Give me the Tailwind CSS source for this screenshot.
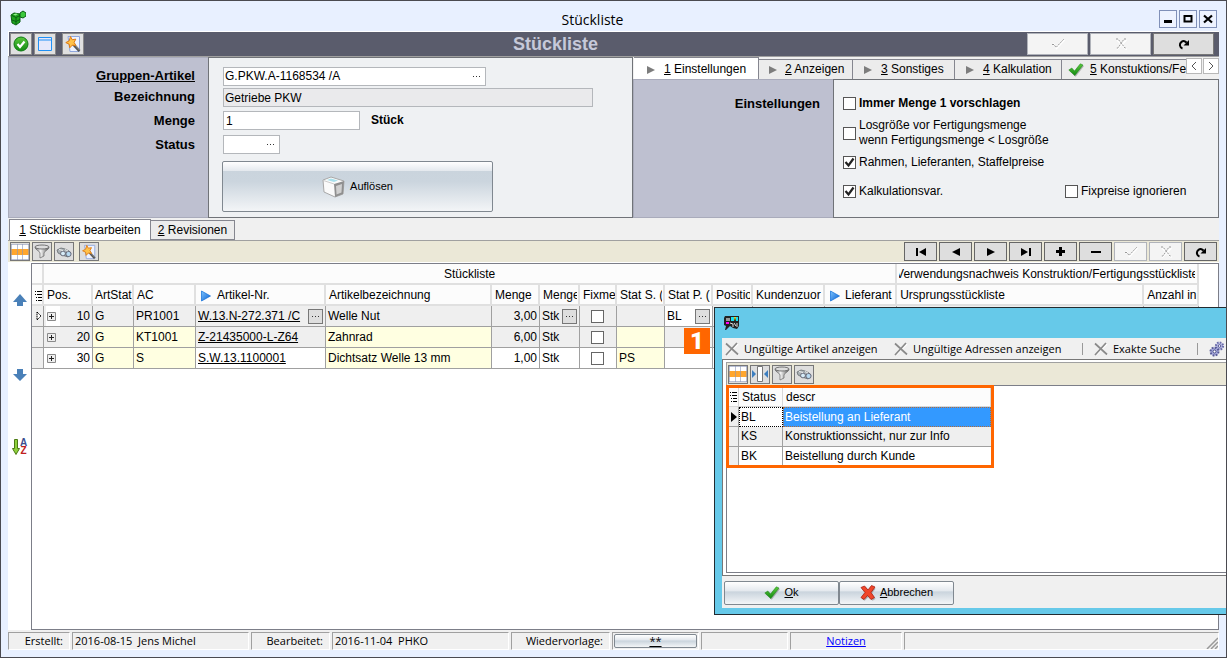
<!DOCTYPE html>
<html lang="de">
<head>
<meta charset="utf-8">
<title>Stückliste</title>
<script src="https://cdn.jsdelivr.net/npm/@tailwindcss/browser@4"></script>
</head>
<body class="bg-white">
<svg class="absolute size-0" aria-hidden="true">
  <defs>
    <linearGradient id="gr" x1="0" y1="0" x2="0" y2="1"><stop offset="0" stop-color="#5cc83c"/><stop offset="1" stop-color="#128a12"/></linearGradient>
    <linearGradient id="bl" x1="0" y1="0" x2="1" y2="1"><stop offset="0" stop-color="#7cc4ff"/><stop offset="1" stop-color="#0a5fd0"/></linearGradient>
    <linearGradient id="fu" x1="0" y1="0" x2="1" y2="0"><stop offset="0" stop-color="#777"/><stop offset=".4" stop-color="#f4f4f4"/><stop offset="1" stop-color="#555"/></linearGradient>
  </defs>
  <symbol id="wand" viewBox="0 0 18 18"><path d="M4 1.500h11.500v15H6z" fill="#eef3ff" stroke="#8fa6dc"/><path d="M9 9l6.500 7" stroke="#555" stroke-width="2.600"/><path d="M9.500 8.500l6 6.500" stroke="#aaa" stroke-width=".8"/><path d="M6.500 1.500l1.700 3.200 3.600-.6-1.700 3.300 1.800 3.200-3.600-.5-2.500 2.700-.6-3.600L1.800 7.600l3.400-1.700z" fill="#ffc24a" stroke="#e07a10"/></symbol>
  <symbol id="rows" viewBox="0 0 18 16"><path d="M0 0h18v16H0z" fill="#fff"/><path d="M0 5h18v6H0z" fill="#ffa62e"/><path d="M0 .5h18M0 15.500h18M.5 0v16M6.500 0v16M11.500 0v16M17.500 0v16" stroke="#8b96b8" stroke-opacity=".6" fill="none"/></symbol>
  <symbol id="funnel" viewBox="0 0 16 16"><path d="M1 3c0 3 5 4 5 6v5l4-2V9c0-2 5-3 5-6z" fill="url(#fu)" stroke="#666" stroke-width=".7"/><ellipse cx="8" cy="3" rx="7" ry="2" fill="#ddd" stroke="#666" stroke-width=".9"/></symbol>
  <symbol id="bino" viewBox="0 0 16 16"><path d="M1 6l4-2 4 1 4 2 2 3-3 3-6-2-4-2z" fill="#a9b0b4" stroke="#666c70" stroke-width=".8"/><circle cx="7" cy="9.500" r="2.400" fill="#d7ecf8" stroke="#556" stroke-width=".8"/><circle cx="12.500" cy="10" r="2.600" fill="#b7daf2" stroke="#556" stroke-width=".8"/><path d="M3 5.500l4 1M9 5.500l3 1.500" stroke="#eee"/></symbol>
  <symbol id="check" viewBox="0 0 16 14"><path d="M1 7.500l3-2 2.500 3L12.500 1l2.800 1.300L7 13z" fill="#777" opacity=".5" transform="translate(.7 .8)"/><path d="M.8 7l3-2 2.700 3L12.300.8 15 2 6.800 12.600z" fill="url(#gr)" stroke="#158015" stroke-width=".5"/></symbol>
  <symbol id="okdim" viewBox="0 0 14 12"><path d="M1 7l1.500-1L5.500 10.500 13.500 2" stroke="#fff" stroke-width="1.500" fill="none"/><path d="M1 6.500h2l2 3 7.500-8h1" stroke="#999" stroke-dasharray="2 1" fill="none"/></symbol>
  <symbol id="xdim" viewBox="0 0 12 12"><path d="M2 2l9.500 9.500M11.500 2L2 11.500" stroke="#fff" stroke-width="1.500"/><path d="M1 1h2l7 9h1M11 1H9L3 10H1" stroke="#999" stroke-dasharray="2 1" fill="none"/></symbol>
  <symbol id="redo" viewBox="0 0 12 12"><path d="M4.500 10.500C1.500 9.500 1 5.500 3.500 3.800c2-1.400 4.200-.6 5 1" fill="none" stroke="#000" stroke-width="2"/><path d="M11 2v5.500H5.500z" fill="#000"/></symbol>
  <symbol id="grayx" viewBox="0 0 14 14"><path d="M2 2l11 11M13 2L2 13" stroke="#fff" stroke-width="1.500"/><path d="M1 1.500l12 11M12 1L1 13" stroke="#8a8a8a" stroke-width="1.700"/></symbol>
  <symbol id="play" viewBox="0 0 10 12"><path d="M.5 1l9 5-9 5z" fill="url(#bl)" stroke="#0a6cd8" stroke-width=".7"/></symbol>
  <symbol id="lines" viewBox="0 0 7 10"><path d="M0 .5h1M2 .5h5M0 3.500h1M2 3.500h5M1 6.500h1M3 6.500h4M1 9.500h1M3 9.500h4" stroke="#000"/></symbol>
  <symbol id="plus" viewBox="0 0 9 9"><path d="M.5.5h8v8h-8z" fill="#eee" stroke="#8a8a8a"/><path d="M2 4.500h5M4.500 2v5" stroke="#222"/></symbol>
  <symbol id="tab" viewBox="0 0 8 8"><path d="M0 0l8 4-8 4z" fill="#7d7d7d"/></symbol>
  <symbol id="tick" viewBox="0 0 11 11"><path d="M1.500 5l3 3.500L9.500 1.500" fill="none" stroke="#222" stroke-width="2.200"/></symbol>
  <symbol id="dots" viewBox="0 0 9 3"><path d="M1 1h1v1H1zM4 1h1v1H4zM7 1h1v1H7z" fill="#333"/></symbol>
</svg>

<div class="relative flex h-screen min-h-[640px] flex-col overflow-hidden border border-[#4a4a50] bg-[#e8f0ff] px-[7px] pb-[7px] text-[12px] leading-[15px] text-black font-['Liberation_Sans',sans-serif]">

  <header class="flex h-[30px] shrink-0 items-center pl-0.5 pr-0.5">
    <svg class="mt-1 size-4" viewBox="0 0 16 16"><path d="M1 5l3-2 6 1v8l-4 3-4-2z" fill="#1fa51f" stroke="#0a5f12"/><path d="M10 3l3-2 3 2v3l-3 2-3-1z" fill="#3cc83c" stroke="#0a5f12"/><path d="M2 5.500l4 2 4-2M6 7.500V14M2 10l4 1.500 4-2" stroke="#0a5f12" fill="none"/><path d="M3 4.500l3-1 2 .5-2.500 1.500z" fill="#8ff08a"/></svg>
    <h1 class="flex-1 pt-2 text-center text-[14px] leading-5 font-['Open_Sans',sans-serif]">Stückliste</h1>
    <div class="flex gap-0.5 pt-1.5">
      <button aria-label="Minimieren" class="grid size-[18px] place-items-center border border-[#8090b8] bg-[#eef3ff]"><svg class="size-3" viewBox="0 0 12 12"><path d="M2 7h8v3H2z"/></svg></button>
      <button aria-label="Maximieren" class="grid size-[18px] place-items-center border border-[#8090b8] bg-[#eef3ff]"><svg class="size-3" viewBox="0 0 12 12"><path d="M2.500 3h7v5.500h-7z" fill="none" stroke="#000" stroke-width="2"/></svg></button>
      <button aria-label="Schließen" class="grid size-[18px] place-items-center border border-[#8090b8] bg-[#eef3ff]"><svg class="size-3" viewBox="0 0 12 12"><path d="M2 2.500l8 7M10 2.500l-8 7" stroke="#000" stroke-width="2.200"/></svg></button>
    </div>
  </header>

  <div class="flex h-[25px] shrink-0 items-center border-t border-l border-white bg-[#5a5c6c] pl-px pr-[5px]">
    <button aria-label="Speichern" class="grid size-[22px] place-items-center border border-[#8a8a8a] bg-[#e0e0e0]"><svg class="size-4" viewBox="0 0 16 16"><circle cx="8" cy="8" r="7" fill="url(#gr)" stroke="#0d7a12"/><path d="M4.500 8l2.500 3 4.500-5.500" stroke="#fff" stroke-width="2.200" fill="none"/></svg></button>
    <button aria-label="Fenster" class="ml-0.5 grid size-[22px] place-items-center border border-[#8a8a8a] bg-[#e0e0e0]"><svg class="size-4" viewBox="0 0 16 16"><path d="M1.500 1.500h13v13h-13z" fill="#e6e8fb" stroke="#1e90f5"/><path d="M1.500 4h13" stroke="#1e90f5"/></svg></button>
    <button aria-label="Assistent" class="ml-1.5 grid size-[22px] place-items-center border border-[#8a8a8a] bg-[#e0e0e0]"><svg class="size-[18px]"><use href="#wand"/></svg></button>
    <h2 class="flex-1 text-center text-[18px] leading-6 font-bold text-[#c6c9d9]">Stückliste</h2>
    <div class="flex gap-0.5">
      <button aria-label="Bestätigen" disabled class="grid h-[22px] w-[61px] place-items-center border border-[#b0b3ba] bg-[#f4f4f4]"><svg class="h-3 w-3.5"><use href="#okdim"/></svg></button>
      <button aria-label="Verwerfen" disabled class="grid h-[22px] w-[61px] place-items-center border border-[#b0b3ba] bg-[#f4f4f4]"><svg class="size-3"><use href="#xdim"/></svg></button>
      <button aria-label="Aktualisieren" class="grid h-[22px] w-[61px] place-items-center border border-[#777] bg-[#dedede]"><svg class="size-3"><use href="#redo"/></svg></button>
    </div>
  </div>

  <section class="flex shrink-0 border-t border-[#a0a0a0] bg-[#f0f0f0]">
    <div class="flex w-[200px] shrink-0 flex-col border border-r-0 border-[#a9abbb] bg-[#bec0d0] pr-[13px] pt-2 text-right text-[13px] leading-[19px] font-bold">
      <label for="grp" class="underline">Gruppen-Artikel</label>
      <label for="bez" class="mt-0.5">Bezeichnung</label>
      <label for="mng" class="mt-[5px]">Menge</label>
      <label for="sts" class="mt-[5px]">Status</label>
    </div>
    <div class="flex w-[425px] shrink-0 flex-col items-start border border-[#707378] bg-[#eff1f3] pb-[5px] pl-[14px] pt-[9px]">
      <div class="flex h-[19px] w-[263px] items-center border border-[#b4b7bb] bg-white pr-1"><input id="grp" value="G.PKW.A-1168534 /A" class="min-w-0 flex-1 pl-px outline-none"><button aria-label="Artikel auswählen"><svg class="h-[3px] w-[9px]"><use href="#dots"/></svg></button></div>
      <input id="bez" readonly value="Getriebe PKW" class="mt-0.5 h-[19px] w-[370px] border border-[#b4b7bb] bg-[#eaeaec] pl-px outline-none">
      <div class="mt-1 flex items-center"><input id="mng" value="1" class="h-[19px] w-[137px] border border-[#b4b7bb] bg-white pl-0.5 outline-none"><span class="ml-[11px] font-bold">Stück</span></div>
      <div class="mt-[5px] flex h-[19px] w-[57px] items-center border border-[#b4b7bb] bg-white pr-1"><input id="sts" class="min-w-0 flex-1 outline-none"><button aria-label="Status auswählen"><svg class="h-[3px] w-[9px]"><use href="#dots"/></svg></button></div>
      <button class="-ml-px mt-[7px] flex h-[51px] w-[271px] items-center justify-center gap-1 rounded-xs border border-[#808890] bg-[linear-gradient(#fff,#e4e9ee_18%,#cad4dd_19%,#cbd5de_40%,#f3f5f7)] text-[11px]">
        <svg class="size-6" viewBox="0 0 24 24"><path d="M1 5l8-3 13 4-1 13-8 3L2 17z" fill="#fafafa" stroke="#a8a8a8"/><path d="M12 9l10-3-1 13-8 3z" fill="#8f8f8f"/><path d="M14 11l6-2-.5 8.500-5 2z" fill="#d0d0d0"/><path d="M1.500 5.500L12 9" stroke="#ccc"/><path d="M9 3.500l7 2-4 1.500-7-2z" fill="#a9e0ec"/></svg>
        <span>Auflösen</span>
      </button>
    </div>
    <div class="flex min-w-0 flex-1 flex-col">
      <div class="relative flex h-[22px] items-end overflow-hidden pl-px" role="tablist">
        <button role="tab" aria-selected="true" class="flex h-[22px] w-[125px] shrink-0 items-center border border-b-0 border-l-0 border-[#85868f] bg-white pl-[13px] pt-0.5"><svg class="mr-[9px] size-2"><use href="#tab"/></svg><span class="whitespace-nowrap"><u>1</u> Einstellungen</span></button>
        <button role="tab" class="flex h-5 w-[94px] shrink-0 items-center border border-b-0 border-l-0 border-[#85868f] bg-[#ececec] pl-[10px]"><svg class="mr-2 size-2"><use href="#tab"/></svg><span class="whitespace-nowrap"><u>2</u> Anzeigen</span></button>
        <button role="tab" class="flex h-5 w-[102px] shrink-0 items-center border border-b-0 border-l-0 border-[#85868f] bg-[#ececec] pl-[11px]"><svg class="mr-[9px] size-2"><use href="#tab"/></svg><span class="whitespace-nowrap"><u>3</u> Sonstiges</span></button>
        <button role="tab" class="flex h-5 w-[107px] shrink-0 items-center border border-b-0 border-l-0 border-[#85868f] bg-[#ececec] pl-[11px]"><svg class="mr-[9px] size-2"><use href="#tab"/></svg><span class="whitespace-nowrap"><u>4</u> Kalkulation</span></button>
        <button role="tab" class="flex h-5 w-[125px] shrink-0 items-center overflow-hidden border-t border-[#85868f] bg-[#ececec] pl-1.5"><svg class="mr-1.5 h-3.5 w-4 shrink-0"><use href="#check"/></svg><span class="w-[97px] overflow-hidden whitespace-nowrap text-left"><u>5</u> Konstuktions/Fer</span></button>
        <div class="absolute right-0 top-px flex bg-[#f0f0f0] pb-[5px]">
          <button aria-label="Zurück blättern" class="grid h-4 w-4 place-items-center border border-[#b8b8b8] bg-white"><svg class="size-2" viewBox="0 0 8 8"><path d="M6 0L2 4l4 4" fill="none" stroke="#555"/></svg></button>
          <button aria-label="Weiter blättern" class="ml-px grid h-4 w-4 place-items-center border border-[#b8b8b8] bg-white"><svg class="size-2" viewBox="0 0 8 8"><path d="M2 0l4 4-4 4" fill="none" stroke="#555"/></svg></button>
        </div>
      </div>
      <div class="flex flex-1">
        <div class="w-[200px] shrink-0 border border-r-0 border-[#a9abbb] bg-[#bec0d0] pr-[13px] pt-[14px] text-right text-[13px] leading-[19px] font-bold">Einstellungen</div>
        <div class="flex flex-1 flex-col border border-[#707378] bg-[#eff1f3] pl-[9px] pt-4">
          <label class="flex items-center gap-[3px] font-bold"><input type="checkbox" class="size-[13px] appearance-none border border-[#555] bg-white">Immer Menge 1 vorschlagen</label>
          <label class="mt-[7px] flex items-center gap-[3px]"><input type="checkbox" class="size-[13px] appearance-none border border-[#555] bg-white"><span>Losgröße vor Fertigungsmenge<br>wenn Fertigungsmenge &lt; Losgröße</span></label>
          <label class="mt-[7px] flex items-center gap-[3px]"><span class="grid place-items-center"><input type="checkbox" checked class="peer col-start-1 row-start-1 size-[13px] appearance-none border border-[#555] bg-white"><svg class="pointer-events-none invisible col-start-1 row-start-1 size-[11px] peer-checked:visible"><use href="#tick"/></svg></span>Rahmen, Lieferanten, Staffelpreise</label>
          <div class="mt-[14px] flex">
            <label class="flex w-[222px] items-center gap-[3px]"><span class="grid place-items-center"><input type="checkbox" checked class="peer col-start-1 row-start-1 size-[13px] appearance-none border border-[#555] bg-white"><svg class="pointer-events-none invisible col-start-1 row-start-1 size-[11px] peer-checked:visible"><use href="#tick"/></svg></span>Kalkulationsvar.</label>
            <label class="flex items-center gap-[3px]"><input type="checkbox" class="size-[13px] appearance-none border border-[#555] bg-white">Fixpreise ignorieren</label>
          </div>
        </div>
      </div>
    </div>
  </section>

  <div class="flex h-[23px] shrink-0 items-end border-b border-[#a0a0a0] bg-[#f0f0f0] pl-px" role="tablist">
    <button role="tab" aria-selected="true" class="h-[21px] w-[142px] border border-b-0 border-[#85868f] bg-white"><u>1</u> Stückliste bearbeiten</button>
    <button role="tab" class="h-5 w-[84px] border border-l-0 border-[#85868f] bg-[#ececec]"><u>2</u> Revisionen</button>
  </div>

  <div class="flex h-[21px] shrink-0 items-center bg-[#ebe8d7] pl-0.5 pr-0.5">
    <div class="flex flex-1 gap-0.5">
      <button aria-label="Spalten" class="grid h-[19px] w-5 place-items-center border border-[#777] bg-[#dedede]"><svg class="h-4 w-[18px]"><use href="#rows"/></svg></button>
      <button aria-label="Filter" class="grid h-[19px] w-5 place-items-center border border-[#777] bg-[#dedede]"><svg class="size-4"><use href="#funnel"/></svg></button>
      <button aria-label="Suchen" class="grid h-[19px] w-5 place-items-center border border-[#777] bg-[#dedede]"><svg class="size-4"><use href="#bino"/></svg></button>
      <button aria-label="Assistent" class="ml-[3px] grid h-[19px] w-5 place-items-center border border-[#777] bg-[#dedede]"><svg class="size-4"><use href="#wand"/></svg></button>
    </div>
    <div class="flex gap-0.5">
      <button aria-label="Erster" class="grid h-[19px] w-[33px] place-items-center border border-[#666] bg-[#dedede]"><svg class="h-2 w-3" viewBox="0 0 12 8"><path d="M1 0h2v8H1zM11 0v8L4 4z"/></svg></button>
      <button aria-label="Voriger" class="grid h-[19px] w-[33px] place-items-center border border-[#666] bg-[#dedede]"><svg class="h-2 w-3" viewBox="0 0 12 8"><path d="M10 0v8L2 4z"/></svg></button>
      <button aria-label="Nächster" class="grid h-[19px] w-[33px] place-items-center border border-[#666] bg-[#dedede]"><svg class="h-2 w-3" viewBox="0 0 12 8"><path d="M2 0v8l8-4z"/></svg></button>
      <button aria-label="Letzter" class="grid h-[19px] w-[33px] place-items-center border border-[#666] bg-[#dedede]"><svg class="h-2 w-3" viewBox="0 0 12 8"><path d="M1 0v8l7-4zM9 0h2v8H9z"/></svg></button>
      <button aria-label="Hinzufügen" class="grid h-[19px] w-[33px] place-items-center border border-[#666] bg-[#dedede]"><svg class="size-[9px]" viewBox="0 0 9 9"><path d="M3 0h3v3h3v3H6v3H3V6H0V3h3z"/></svg></button>
      <button aria-label="Entfernen" class="grid h-[19px] w-[33px] place-items-center border border-[#666] bg-[#dedede]"><svg class="size-[10px]" viewBox="0 0 10 10"><path d="M0 4h10v2H0z"/></svg></button>
      <button aria-label="Bestätigen" disabled class="grid h-[19px] w-[33px] place-items-center border border-[#b0b3ba] bg-[#f4f4f4]"><svg class="h-3 w-3.5"><use href="#okdim"/></svg></button>
      <button aria-label="Verwerfen" disabled class="grid h-[19px] w-[33px] place-items-center border border-[#b0b3ba] bg-[#f4f4f4]"><svg class="size-3"><use href="#xdim"/></svg></button>
      <button aria-label="Aktualisieren" class="grid h-[19px] w-[33px] place-items-center border border-[#666] bg-[#dedede]"><svg class="size-3"><use href="#redo"/></svg></button>
    </div>
  </div>

  <main class="flex min-h-0 flex-1 bg-white pt-px">
    <div class="flex w-[23px] shrink-0 flex-col items-center pt-[31px]">
      <button aria-label="Nach oben"><svg class="h-3 w-3.5" viewBox="0 0 14 12"><path d="M7 0l7 8h-4v4H4V8H0z" fill="#4a80b8"/></svg></button>
      <button aria-label="Nach unten" class="mt-[63px]"><svg class="h-3 w-3.5" viewBox="0 0 14 12"><path d="M7 12l7-7h-4V0H4v5H0z" fill="#4a80b8"/></svg></button>
      <button aria-label="Sortieren" class="mt-[58px] flex items-center"><svg class="h-4 w-2" viewBox="0 0 8 16"><path d="M2.500.5h3v9h2L4 15.500.5 9.500h2z" fill="#8ed03c" stroke="#4c7a14"/></svg><span class="text-[10px] leading-[8px] font-bold"><span class="block text-[#3c5090]">A</span><span class="block text-[#c02020]">Z</span></span></button>
    </div>
    <div class="min-w-0 flex-1 overflow-hidden border border-[#7c7e88]">
      <table class="w-[1167px] table-fixed border-separate border-spacing-0 whitespace-nowrap">
        <colgroup><col class="w-[12px]"><col class="w-[49px]"><col class="w-[41px]"><col class="w-[62px]"><col class="w-[130px]"><col class="w-[166px]"><col class="w-[48px]"><col class="w-[40px]"><col class="w-[37px]"><col class="w-[48px]"><col class="w-[48px]"><col class="w-[40px]"><col class="w-[72px]"><col class="w-[72px]"><col class="w-[247px]"><col class="w-[55px]"></colgroup>
        <thead class="bg-[#fcfcfc] [&_th]:h-[21px] [&_th]:overflow-hidden [&_th]:border-r-2 [&_th]:border-b-2 [&_th]:border-[#e0e0e0] [&_th]:p-0 [&_th]:pt-0.5 [&_th]:text-left [&_th]:font-normal">
          <tr><th></th><th colspan="13"><div class="text-center">Stückliste</div></th><th colspan="2"><div class="mx-0.5 flex justify-center overflow-hidden"><span>Verwendungsnachweis Konstruktion/Fertigungsstückliste</span></div></th></tr>
          <tr>
            <th><svg class="ml-[3px] h-2.5 w-[7px]"><use href="#lines"/></svg></th>
            <th><div class="pl-[3px]">Pos.</div></th>
            <th><div class="overflow-hidden pl-0.5">ArtStat</div></th>
            <th><div class="pl-[3px]">AC</div></th>
            <th><div class="flex items-center gap-1.5 pl-[5px]"><svg class="h-3 w-2.5"><use href="#play"/></svg>Artikel-Nr.</div></th>
            <th><div class="pl-[3px]">Artikelbezeichnung</div></th>
            <th><div class="pl-[3px]">Menge</div></th>
            <th><div class="mr-px overflow-hidden pl-[3px]">Menge</div></th>
            <th><div class="overflow-hidden pl-[3px]">Fixme</div></th>
            <th><div class="mr-px overflow-hidden pl-[3px]">Stat S. (</div></th>
            <th><div class="mr-px overflow-hidden pl-[3px]">Stat P. (S</div></th>
            <th><div class="mr-px overflow-hidden pl-[3px]">Positio</div></th>
            <th><div class="mr-px overflow-hidden pl-[3px]">Kundenzuor</div></th>
            <th><div class="flex items-center gap-[5px] pl-[5px]"><svg class="h-3 w-2.5 shrink-0"><use href="#play"/></svg>Lieferant</div></th>
            <th><div class="pl-[3px]">Ursprungsstückliste</div></th>
            <th><div class="pl-[3px]">Anzahl in</div></th>
          </tr>
        </thead>
        <tbody class="[&_td]:h-[21px] [&_td]:border-r [&_td]:border-b [&_td]:border-[#a0a0a0] [&_td]:p-0 [&_td]:pl-0.5">
          <tr class="bg-[#efefef]">
            <td><svg class="ml-0.5 h-2.5 w-1.5" viewBox="0 0 6 10"><path d="M1 1l4 4-4 4z" fill="#fff" stroke="#000" stroke-dasharray="1.500 .5"/></svg></td>
            <td><div class="flex items-center"><button aria-label="Aufklappen" class="grid h-5 w-3.5 items-center justify-start bg-white pl-px"><svg class="size-[9px]"><use href="#plus"/></svg></button><span class="flex-1 pr-0.5 text-right">10</span></div></td>
            <td>G</td><td>PR1001</td>
            <td><div class="flex items-center justify-between pr-0.5"><a href="#" class="underline">W.13.N-272.371 /C</a><button aria-label="Artikel auswählen" class="grid size-[15px] place-items-center border border-[#777] bg-[#dedede]"><svg class="h-[3px] w-[9px]"><use href="#dots"/></svg></button></div></td>
            <td>Welle Nut</td><td><div class="pr-0.5 text-right">3,00</div></td>
            <td><div class="flex items-center justify-between pr-0.5">Stk<button aria-label="Einheit auswählen" class="grid size-[15px] place-items-center border border-[#777] bg-[#dedede]"><svg class="h-[3px] w-[9px]"><use href="#dots"/></svg></button></div></td>
            <td class="pr-1!"><input type="checkbox" aria-label="Fixmenge 10" class="mx-auto block size-[13px] appearance-none border border-[#666] bg-white"></td>
            <td></td>
            <td class="bg-white"><div class="flex items-center justify-between pr-0.5">BL<button aria-label="Status auswählen" class="grid size-[15px] place-items-center border border-[#777] bg-[#dedede]"><svg class="h-[3px] w-[9px]"><use href="#dots"/></svg></button></div></td>
            <td></td><td></td><td></td><td></td><td></td>
          </tr>
          <tr class="bg-[#efefef]">
            <td></td>
            <td><div class="flex items-center"><button aria-label="Aufklappen" class="grid h-5 w-3.5 items-center justify-start pl-px"><svg class="size-[9px]"><use href="#plus"/></svg></button><span class="flex-1 pr-0.5 text-right">20</span></div></td>
            <td class="bg-[#ffffe1]">G</td><td class="bg-[#ffffe1]">KT1001</td>
            <td><a href="#" class="underline">Z-21435000-L-Z64</a></td>
            <td class="bg-[#ffffe1]">Zahnrad</td><td><div class="pr-0.5 text-right">6,00</div></td><td>Stk</td>
            <td class="pr-1!"><input type="checkbox" aria-label="Fixmenge 20" class="mx-auto block size-[13px] appearance-none border border-[#666] bg-white"></td>
            <td class="bg-[#ffffe1]"></td><td></td><td></td><td></td><td></td><td></td><td></td>
          </tr>
          <tr>
            <td class="bg-[#efefef]"></td>
            <td><div class="flex items-center"><button aria-label="Aufklappen" class="grid h-5 w-3.5 items-center justify-start pl-px"><svg class="size-[9px]"><use href="#plus"/></svg></button><span class="flex-1 pr-0.5 text-right">30</span></div></td>
            <td class="bg-[#ffffe1]">G</td><td class="bg-[#ffffe1]">S</td>
            <td><a href="#" class="underline">S.W.13.1100001</a></td>
            <td class="bg-[#ffffe1]">Dichtsatz Welle 13 mm</td><td><div class="pr-0.5 text-right">1,00</div></td><td>Stk</td>
            <td class="pr-1!"><input type="checkbox" aria-label="Fixmenge 30" class="mx-auto block size-[13px] appearance-none border border-[#666] bg-white"></td>
            <td class="bg-[#ffffe1]">PS</td><td></td><td></td><td></td><td></td><td></td><td></td>
          </tr>
        </tbody>
      </table>
    </div>
  </main>

  <footer class="flex shrink-0 gap-0.5 bg-[#f0f0f0] pt-0.5 text-[11px] leading-4 font-['Open_Sans',sans-serif] [&>div]:h-[18px] [&>div]:border [&>div]:border-t-[#a0a0a0] [&>div]:border-r-white [&>div]:border-b-white [&>div]:border-l-[#a0a0a0]">
    <div class="w-[62px] pr-1.5 text-right">Erstellt:</div>
    <div class="w-[177px] whitespace-pre pl-0.5">2016-08-15  Jens Michel</div>
    <div class="w-[79px] pr-1.5 text-right">Bearbeitet:</div>
    <div class="w-[177px] whitespace-pre pl-0.5">2016-11-04  PHKO</div>
    <div class="w-[99px] pr-1.5 text-right">Wiedervorlage:</div>
    <div class="flex w-[87px] items-center justify-center"><button class="h-3.5 w-[83px] rounded-xs border border-[#808890] bg-[linear-gradient(#fff,#e4e9ee_40%,#cad4dd_50%,#f3f5f7)] leading-3 underline">**</button></div>
    <div class="w-[87px]"></div>
    <div class="w-[112px] text-center"><a href="#" class="text-[#0000ff] underline">Notizen</a></div>
    <div class="flex flex-1 items-end justify-end"><svg class="size-3" viewBox="0 0 12 12"><path d="M1 12L12 1M5 12l7-7M9 12l3-3" stroke="#999" stroke-width="1.500"/></svg></div>
  </footer>

  <span class="absolute left-[683px] top-[327px] grid size-[26px] place-items-center bg-[#ff6600] text-[24px] leading-none font-black text-white font-['Roboto',sans-serif]">1</span>

  <div role="dialog" aria-label="Status auswählen" class="absolute bottom-[42px] left-[713px] -right-px top-[306px] flex flex-col overflow-hidden border border-r-0 border-[#222b30] bg-[#66c9e9] pb-[6px] pl-[7px]">
    <div class="flex h-[30px] shrink-0 items-center pl-0.5">
      <svg class="size-4" viewBox="0 0 16 16"><path d="M1 1h14v10l-2 3-4-1-3-2-4 4H1l1-4-2-1V3z" fill="#222"/><path d="M2 3h4v3H2z" fill="#999"/><path d="M7 2h3v4H7z" fill="#19e0f0"/><path d="M10 2h2l-1 4z" fill="#ffe92e"/><path d="M12 2h2v4h-2z" fill="#19e0f0"/><path d="M2 7h3v2H2z" fill="#f0f"/><path d="M6 8l3 1v3M10 8l2 3M13 8v4" stroke="#ddd" fill="none"/></svg>
    </div>
    <div class="flex h-[21px] shrink-0 items-center whitespace-nowrap bg-[#f0f0f0] pl-[3px] text-[11px] font-['Open_Sans',sans-serif]">
      <button class="flex w-[169px] items-center gap-[5px]"><svg class="size-3.5"><use href="#grayx"/></svg>Ungültige Artikel anzeigen</button>
      <button class="flex w-[188px] items-center gap-[5px]"><svg class="size-3.5"><use href="#grayx"/></svg>Ungültige Adressen anzeigen</button>
      <span class="h-3 w-px bg-[#999]"></span>
      <button class="ml-[11px] flex w-[103px] items-center gap-[5px]"><svg class="size-3.5"><use href="#grayx"/></svg>Exakte Suche</button>
      <span class="h-3 w-px bg-[#999]"></span>
      <button aria-label="Einstellungen" class="ml-[11px]"><svg class="size-4" viewBox="0 0 16 16"><circle cx="10.500" cy="5" r="3.600" fill="#b9bbe6" stroke="#6a6ca8" stroke-width="2" stroke-dasharray="1.600 1.200"/><circle cx="10.500" cy="5" r="1.300" fill="#fff" stroke="#55588f"/><circle cx="5.500" cy="10.500" r="4" fill="#a5a8dc" stroke="#565994" stroke-width="2" stroke-dasharray="1.800 1.300"/><circle cx="5.500" cy="10.500" r="1.500" fill="#fff" stroke="#484b82"/></svg></button>
    </div>
    <div class="flex min-h-0 flex-1 flex-col border-y border-l border-[#777] bg-white pb-0.5 pl-[3px] pt-0.5">
      <div class="flex h-[23px] shrink-0 items-center gap-0.5 border-t border-l border-[#a0a0a0] bg-[#ebe8d7] pl-px">
        <button aria-label="Spalten" class="grid h-[19px] w-5 place-items-center border border-[#777] bg-[#dedede]"><svg class="h-4 w-[18px]"><use href="#rows"/></svg></button>
        <button aria-label="Breite anpassen" class="grid h-[19px] w-5 place-items-center border border-[#777] bg-[#dedede]"><svg class="h-4 w-[18px]" viewBox="0 0 18 16"><path d="M6.500.5h5v15h-5z" fill="#fff" stroke="#777"/><path d="M1 4l4 4-4 4zM17 4l-4 4 4 4z" fill="#3c7ec0"/></svg></button>
        <button aria-label="Filter" class="grid h-[19px] w-5 place-items-center border border-[#777] bg-[#dedede]"><svg class="size-4"><use href="#funnel"/></svg></button>
        <button aria-label="Suchen" class="grid h-[19px] w-5 place-items-center border border-[#777] bg-[#dedede]"><svg class="size-4"><use href="#bino"/></svg></button>
      </div>
      <div class="min-h-0 flex-1 border-y border-l border-[#7c7e88]">
        <div class="-ml-px -mt-px w-[268px] border-[3px] border-[#ff6600]">
          <table class="w-full table-fixed border-separate border-spacing-0 whitespace-nowrap">
            <colgroup><col class="w-[10px]"><col class="w-[44px]"><col></colgroup>
            <thead class="bg-[#fcfcfc] [&_th]:h-[19px] [&_th]:border-r [&_th]:border-b [&_th]:border-[#d8d8d8] [&_th]:p-0 [&_th]:pl-[3px] [&_th]:text-left [&_th]:font-normal">
              <tr><th><svg class="-ml-0.5 h-2.5 w-[7px]"><use href="#lines"/></svg></th><th>Status</th><th>descr</th></tr>
            </thead>
            <tbody class="[&_td]:h-5 [&_td]:p-0 [&_td]:pl-0.5">
              <tr><td class="border-r border-b border-[#a0a0a0] bg-[#efefef]"><svg class="h-2.5 w-1.5" viewBox="0 0 6 10"><path d="M0 0l6 5-6 5z"/></svg></td><td class="border border-dotted border-black pl-px!">BL</td><td class="border border-dotted border-[#b06a3a] bg-[#3399ff] pl-px! text-white">Beistellung an Lieferant</td></tr>
              <tr class="bg-[#efefef]"><td class="border-r border-b border-[#a0a0a0]"></td><td class="border-r border-b border-[#a0a0a0]">KS</td><td class="border-b border-[#a0a0a0]">Konstruktionssicht, nur zur Info</td></tr>
              <tr class="[&>td]:h-[18px]"><td class="border-r border-[#a0a0a0] bg-[#efefef]"></td><td class="border-r border-[#a0a0a0]">BK</td><td>Beistellung durch Kunde</td></tr>
            </tbody>
          </table>
        </div>
      </div>
    </div>
    <div class="flex h-8 shrink-0 items-center bg-[#f0f0f0] pl-0.5 pt-px text-[11px]">
      <button class="flex h-6 w-[115px] items-center justify-center gap-1 rounded-xs border border-[#808890] bg-[linear-gradient(#fff,#e4e9ee_40%,#cad4dd_45%,#f3f5f7)]"><svg class="h-3.5 w-4"><use href="#check"/></svg><span><u>O</u>k</span></button>
      <button class="flex h-6 w-[115px] items-center justify-center gap-1 rounded-xs border border-[#808890] bg-[linear-gradient(#fff,#e4e9ee_40%,#cad4dd_45%,#f3f5f7)]"><svg class="size-4" viewBox="0 0 16 16"><path d="M2 2l3-1 3 4 4-4 3 2-4 5 4 5-3 2-4-4-4 4-3-2 4-5z" fill="#777" opacity=".5" transform="translate(.6 .8)"/><path d="M1 2.500L4.500 1 8 5l3.500-4.500L15 2l-4 5.500 3.500 5L11 14.500 7.500 10.500 4 14.500l-3-2L5 7.500z" fill="#f0462a" stroke="#a82010" stroke-width=".8"/></svg><span><u>A</u>bbrechen</span></button>
    </div>
  </div>
</div>
</body>
</html>
